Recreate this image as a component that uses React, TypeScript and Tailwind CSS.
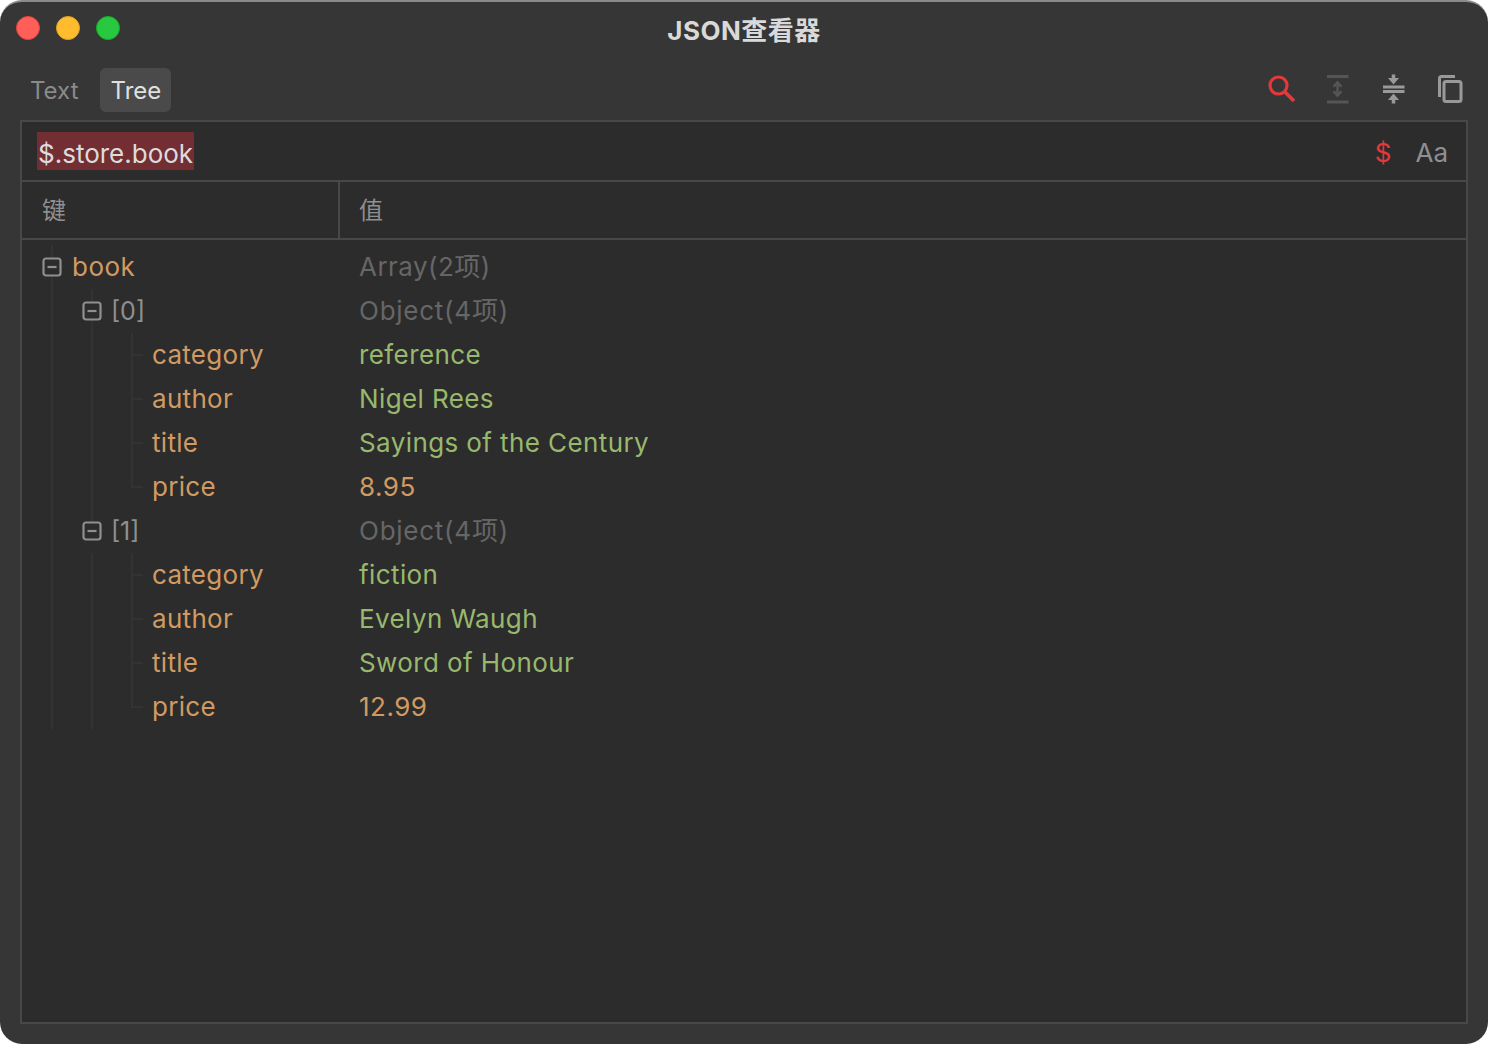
const font = { fontFamily: '"Inter", "Noto Sans CJK SC", sans-serif' };

type Row = { depth: number; k: string; v: string; kind: "node" | "leaf"; vt: "meta" | "str" | "num"; last?: boolean };

const rows: Row[] = [
  { depth: 0, k: "book", v: "Array(2项)", kind: "node", vt: "meta" },
  { depth: 1, k: "[0]", v: "Object(4项)", kind: "node", vt: "meta" },
  { depth: 2, k: "category", v: "reference", kind: "leaf", vt: "str" },
  { depth: 2, k: "author", v: "Nigel Rees", kind: "leaf", vt: "str" },
  { depth: 2, k: "title", v: "Sayings of the Century", kind: "leaf", vt: "str" },
  { depth: 2, k: "price", v: "8.95", kind: "leaf", vt: "num", last: true },
  { depth: 1, k: "[1]", v: "Object(4项)", kind: "node", vt: "meta", last: true },
  { depth: 2, k: "category", v: "fiction", kind: "leaf", vt: "str" },
  { depth: 2, k: "author", v: "Evelyn Waugh", kind: "leaf", vt: "str" },
  { depth: 2, k: "title", v: "Sword of Honour", kind: "leaf", vt: "str" },
  { depth: 2, k: "price", v: "12.99", kind: "leaf", vt: "num", last: true },
];

function MinusBox() {
  return (
    <svg width="20" height="20" viewBox="0 0 20 20" className="absolute left-[-9px] top-[12px]">
      <rect x="1.5" y="1.5" width="17" height="17" rx="2.5" fill="#2c2c2c" stroke="#8f8f8f" strokeWidth="2.2" />
      <path d="M5.5 10H14.5" stroke="#8f8f8f" strokeWidth="2.2" />
    </svg>
  );
}

function TreeRow({ r }: { r: Row }) {
  const vc =
    r.vt === "meta"
      ? r.v.startsWith("Object")
        ? "tracking-[0.75px] text-[#666666]"
        : "tracking-[0.45px] text-[#666666]"
      : r.vt === "str"
        ? "tracking-[0.4px] text-[#98b96d]"
        : "tracking-[0.5px] text-[#d19a62]";
  const bracket = r.k.startsWith("[");
  const kc = bracket
    ? "ml-[-1px] pt-[2px] text-[25px] tracking-normal text-[#8f8f8f]"
    : r.depth === 2
      ? "pb-[2px] tracking-[0.3px] text-[#d19a62]"
      : "pb-[2px] text-[#d19a62]";
  return (
    <div className="flex h-11 items-center">
      <div className="flex h-full w-[316px] shrink-0 items-center pl-[29px]">
        {Array.from({ length: r.depth }).map((_, i) => (
          <span key={i} className="h-full w-10 shrink-0 border-l-2 border-[#333333]" />
        ))}
        <span className="relative h-full w-[21px] shrink-0">
          <span className={`absolute left-0 top-0 w-[2px] bg-[#333333] ${r.last ? "h-[23px]" : "h-full"}`} />
          <span className="absolute left-0 top-[21px] h-[2px] w-3 bg-[#333333]" />
          {r.kind === "node" && <MinusBox />}
        </span>
        <span className={`whitespace-nowrap ${kc}`}>{r.k}</span>
      </div>
      <div className={`whitespace-nowrap pb-[2px] pl-[21px] ${vc}`}>{r.v}</div>
    </div>
  );
}

function Toolbar() {
  return (
    <div className="flex items-center gap-[24px]">
      <svg width="32" height="32" viewBox="0 0 32 32" fill="none">
        <circle cx="12.5" cy="12.500" r="8.500" stroke="#e5383b" strokeWidth="3.200" />
        <path d="M18.500 18.500L28 28" stroke="#e5383b" strokeWidth="3.800" />
      </svg>
      <svg width="32" height="32" viewBox="0 0 32 32" fill="none" stroke="#555555">
        <path d="M5 3.500H26.500M5 29H26.500" strokeWidth="3" />
        <path d="M15.500 10V22" strokeWidth="2.500" />
        <path d="M10.500 13L15.500 7.500L20.500 13L18.500 14.500L15.500 11.500L12.500 14.500ZM10.500 19L15.500 24.500L20.500 19L18.500 17.500L15.500 20.500L12.500 17.500Z" fill="#555555" strokeWidth="0" />
      </svg>
      <svg width="32" height="32" viewBox="0 0 32 32" fill="none" stroke="#999999">
        <path d="M5 14H26.500M5 18.500H26.500" strokeWidth="2.800" />
        <path d="M15.500 1.500V6M15.500 26V30.500" strokeWidth="3.500" />
        <path d="M10 5H21L15.500 11.500ZM10 27H21L15.500 20.500Z" fill="#999999" strokeWidth="0" />
      </svg>
      <svg width="32" height="32" viewBox="0 0 32 32" fill="none" stroke="#999999" strokeWidth="3">
        <path d="M5.500 24V5.500A2 2 0 0 1 7.500 3.500H21" />
        <rect x="10" y="8.500" width="17" height="20" rx="2" />
      </svg>
    </div>
  );
}

export default function App() {
  return (
    <div style={font} className="h-[1044px] w-[1488px] overflow-hidden bg-white text-[26px] tracking-[0.5px]">
      <div className="flex h-full flex-col rounded-[22px] border-t-2 border-[#8a8a8a] bg-[#363636] px-[20px] pb-[20px]">
        <div className="relative flex h-[58px] shrink-0 items-center justify-center pb-[2px]">
          <div className="absolute left-[-4px] top-[14px] flex gap-4">
            <span className="h-6 w-6 rounded-full border border-[#e0443e] bg-[#ff5f57]" />
            <span className="h-6 w-6 rounded-full border border-[#dea123] bg-[#febc2e]" />
            <span className="h-6 w-6 rounded-full border border-[#1aab29] bg-[#28c840]" />
          </div>
          <span className="text-[26px] font-bold tracking-[0.5px] text-[#d9d9d9]">JSON查看器</span>
        </div>
        <div className="flex h-[60px] shrink-0 items-start justify-between">
          <div className="mt-[8px] flex items-center gap-[11px] text-[24px] tracking-normal">
            <span className="flex h-11 items-center px-[10px] pt-[2px] text-[#8a8a8a]">Text</span>
            <span className="flex h-11 items-center rounded-[6px] bg-[#4a4a4a] pl-[11px] pr-[10px] pt-[2px] text-[#e0e0e0]">Tree</span>
          </div>
          <div className="mr-[2px] mt-[13px]"><Toolbar /></div>
        </div>
        <div className="flex min-h-0 flex-1 flex-col border-2 border-[#484848] bg-[#2c2c2c]">
          <div className="flex h-[60px] shrink-0 items-center justify-between border-b-2 border-[#484848] pl-[15px] pr-[18px]">
            <span className="flex h-[38px] items-center bg-[#722e32] px-[1px] pt-[4px] tracking-normal text-[#dcdcdc]">$.store.book</span>
            <div className="flex items-center gap-[24px] pt-[2px] tracking-normal">
              <span className="text-[#e5383b]">$</span>
              <span className="text-[#8f8f8f]">Aa</span>
            </div>
          </div>
          <div className="flex h-[58px] shrink-0 border-b-2 border-[#484848] text-[24px] text-[#8f8f8f]">
            <div className="flex w-[318px] shrink-0 items-center border-r-2 border-[#484848] pl-[20px] pt-[2px]">键</div>
            <div className="flex items-center pl-[19px] pt-[2px]">值</div>
          </div>
          <div className="pt-[5px]">
            {rows.map((r, i) => (
              <TreeRow key={i} r={r} />
            ))}
          </div>
        </div>
      </div>
    </div>
  );
}
